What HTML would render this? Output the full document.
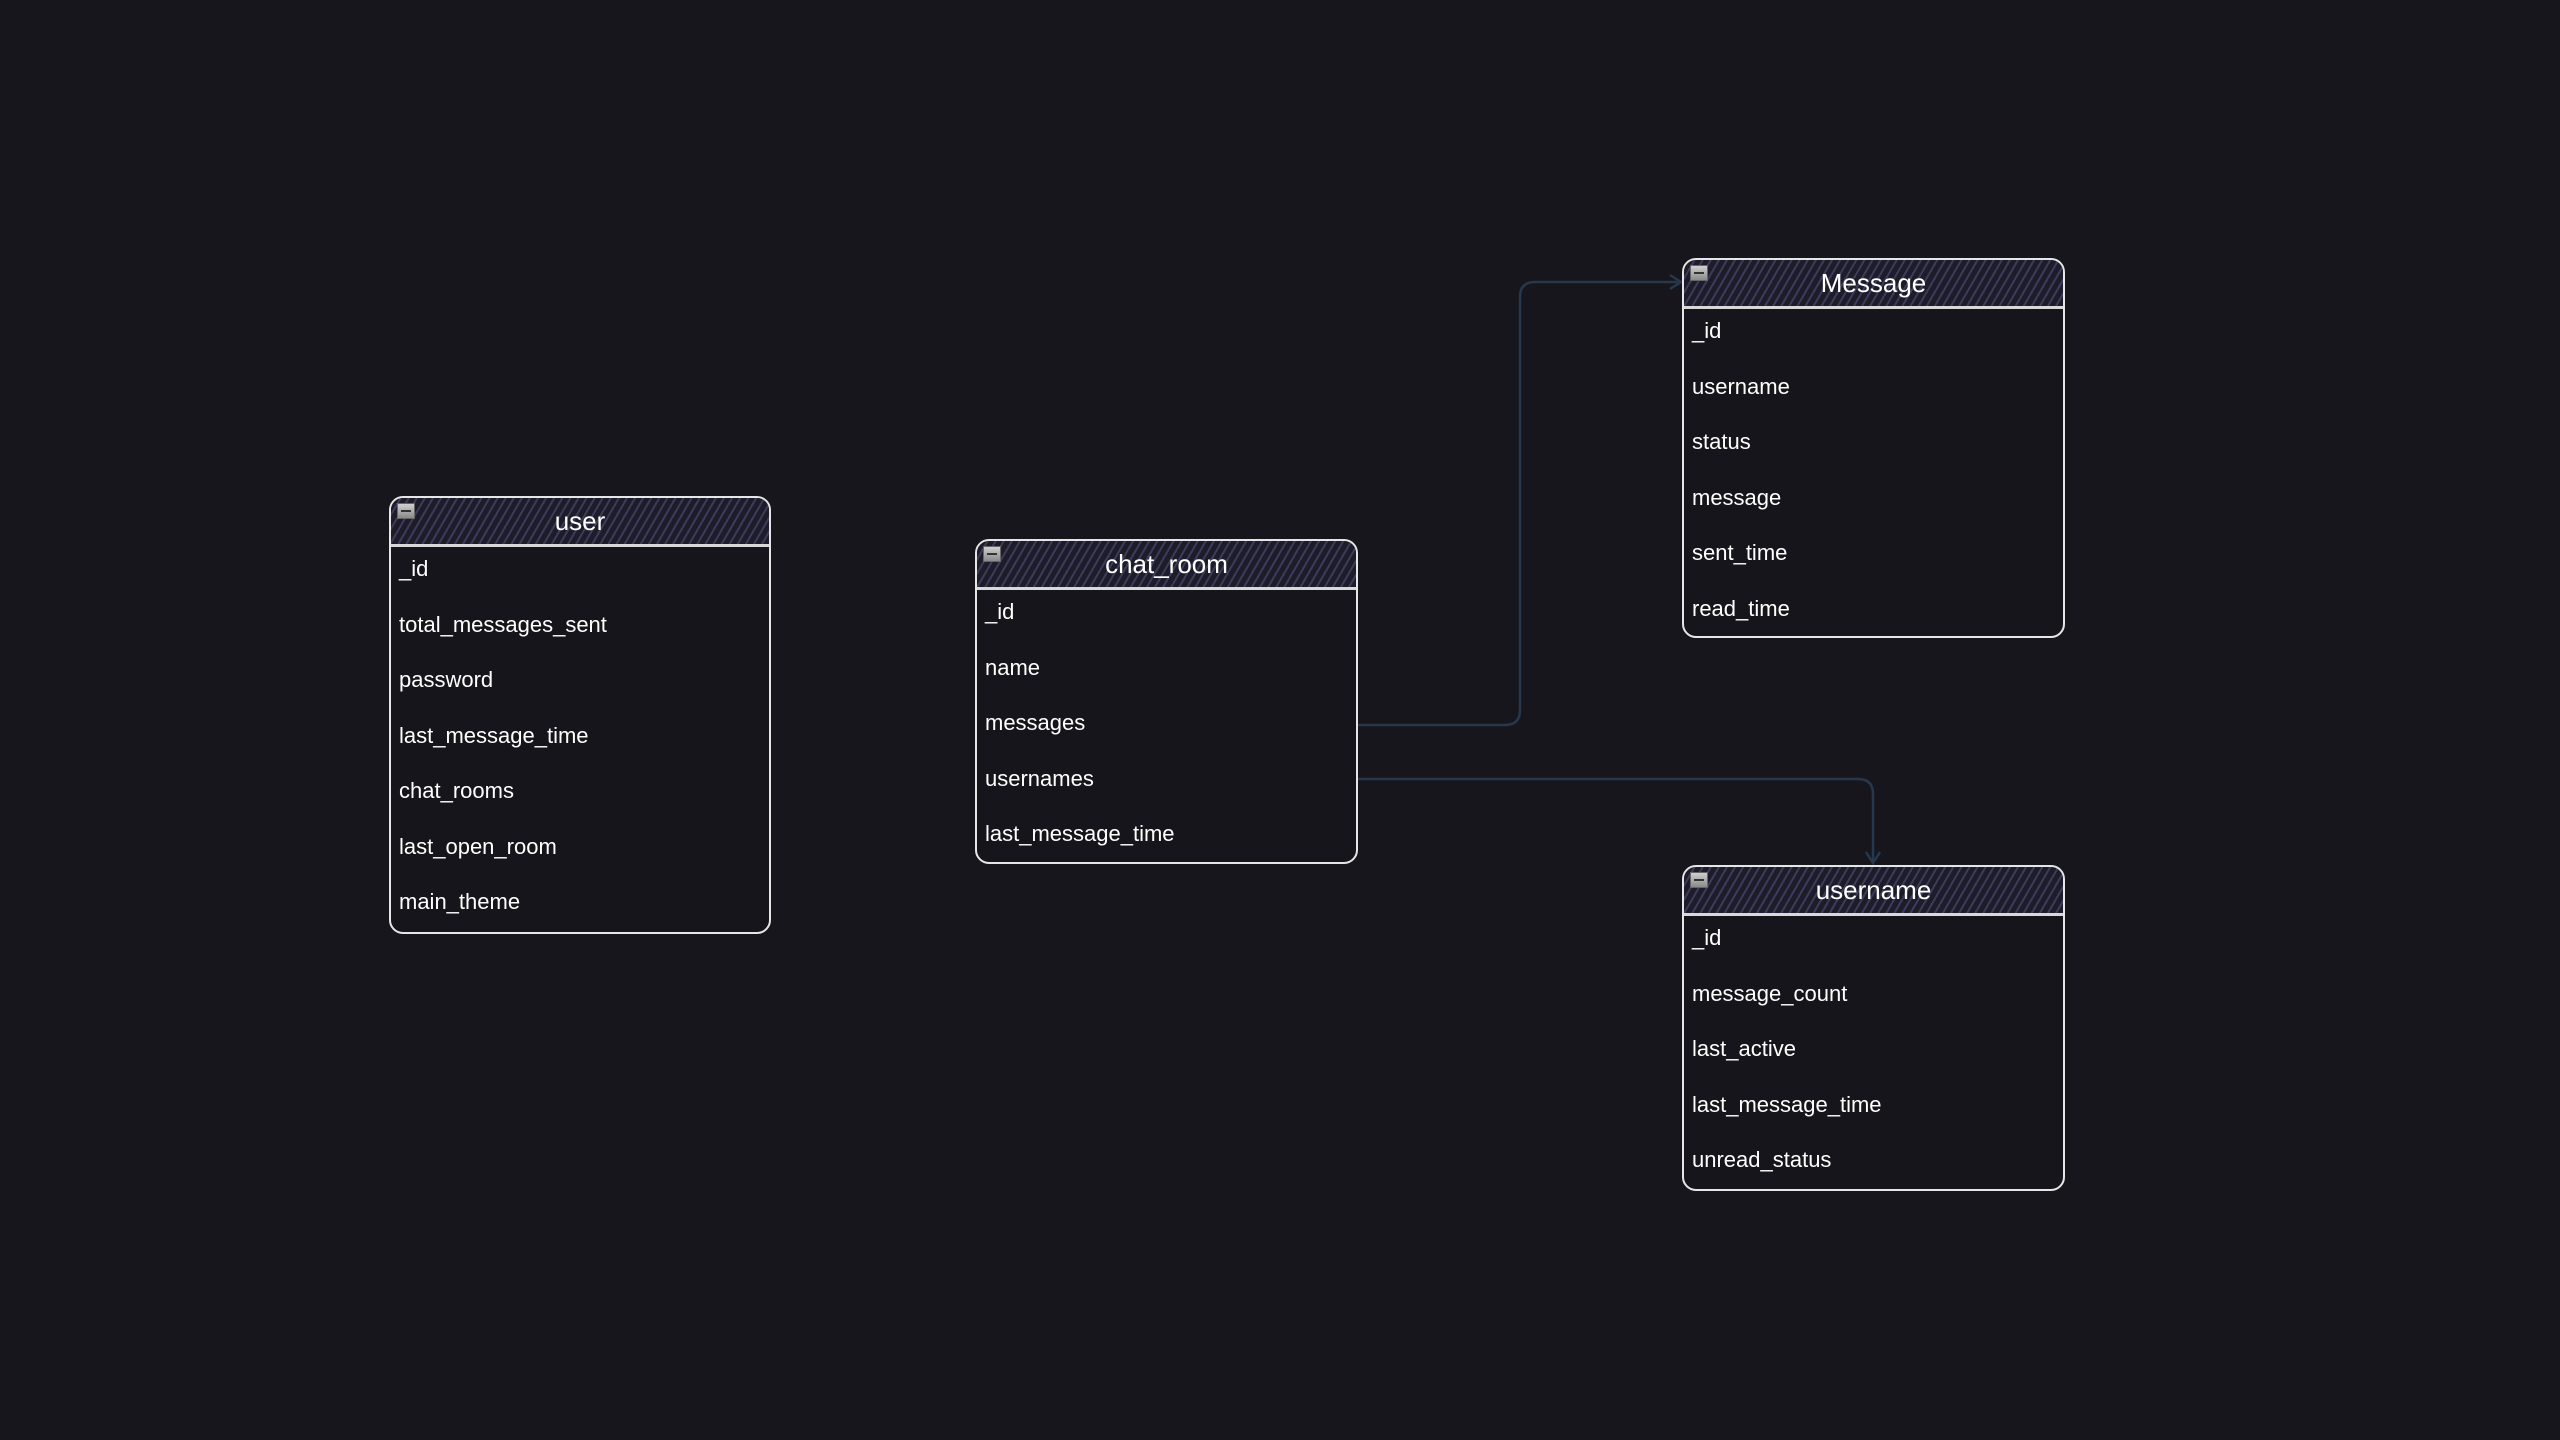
<!DOCTYPE html>
<html><head><meta charset="utf-8"><style>
html,body{margin:0;padding:0;background:#17161d;width:2560px;height:1440px;overflow:hidden;font-family:"Liberation Sans",Arial,sans-serif;}
.t{position:absolute;box-sizing:border-box;border:2px solid #e6e6e6;border-radius:14px;background:#16151b;color:#fff;}
.h{height:46px;border-bottom:3px solid #d8d8d8;border-radius:12px 12px 0 0;background:repeating-linear-gradient(-60deg,#1d1c28 0 5px,#3c3b5c 5px 7px);text-align:center;font-size:26px;line-height:46px;position:relative;}
.h i{position:absolute;left:6px;top:5px;width:16px;height:14px;background:linear-gradient(#d0d0d0,#8a8a8a);border:1px solid #666;}
.h i:after{content:"";position:absolute;left:3px;right:3px;top:6px;height:2px;background:#333;}
.r{height:55.5px;line-height:44px;font-size:22px;padding-left:8px;}
</style></head><body>
<svg width="2560" height="1440" style="position:absolute;left:0;top:0">
<g fill="none" stroke="#27384c" stroke-width="2.5">
<path d="M1358 725 L1505 725 Q1520 725 1520 710 L1520 297 Q1520 282 1535 282 L1678 282"/>
<path d="M1670 275 L1681 282 L1670 289"/>
<path d="M1358 779 L1858 779 Q1873 779 1873 794 L1873 862"/>
<path d="M1866 852 L1873 863 L1880 852"/>
</g></svg>
<div class="t" style="left:389px;top:496px;width:382px;height:438px">
<div class="h"><i></i>user</div>
<div class="r">_id</div><div class="r">total_messages_sent</div><div class="r">password</div><div class="r">last_message_time</div><div class="r">chat_rooms</div><div class="r">last_open_room</div><div class="r">main_theme</div>
</div>
<div class="t" style="left:975px;top:539px;width:383px;height:325px">
<div class="h"><i></i>chat_room</div>
<div class="r">_id</div><div class="r">name</div><div class="r">messages</div><div class="r">usernames</div><div class="r">last_message_time</div>
</div>
<div class="t" style="left:1682px;top:258px;width:383px;height:380px">
<div class="h"><i></i>Message</div>
<div class="r">_id</div><div class="r">username</div><div class="r">status</div><div class="r">message</div><div class="r">sent_time</div><div class="r">read_time</div>
</div>
<div class="t" style="left:1682px;top:865px;width:383px;height:326px">
<div class="h"><i></i>username</div>
<div class="r">_id</div><div class="r">message_count</div><div class="r">last_active</div><div class="r">last_message_time</div><div class="r">unread_status</div>
</div>
</body></html>
